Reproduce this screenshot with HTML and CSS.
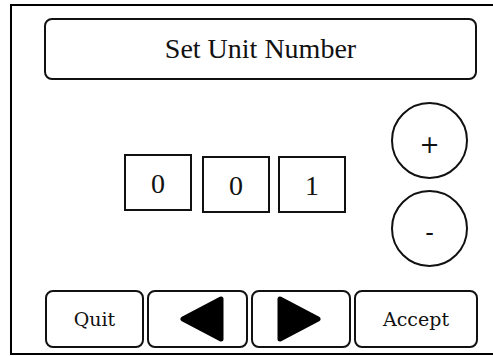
FILE: index.html
```html
<!DOCTYPE html>
<html lang="en">
<head>
    <meta charset="UTF-8">
    <meta name="viewport" content="width=device-width, initial-scale=1.0">
    <title>Set Unit Number</title>
    <link rel="stylesheet" href="styles.css">
</head>
<body>
    <div class="screen">
        <div class="title">Set Unit Number</div>

        <div class="middle">
            <div class="digits">
                <div class="digit first">0</div>
                <div class="digit">0</div>
                <div class="digit">1</div>
            </div>
            <div class="steppers">
                <div class="round">+</div>
                <div class="round">-</div>
            </div>
        </div>

        <div class="controls">
            <div class="btn quit">Quit</div>
            <div class="btn arrow">
                <svg width="46" height="48" viewBox="0 0 46 48">
                    <polygon points="4,24 42,4 42,44" fill="#000" stroke="#000" stroke-width="5" stroke-linejoin="round"/>
                </svg>
            </div>
            <div class="btn arrow right">
                <svg width="46" height="48" viewBox="0 0 46 48">
                    <polygon points="42,24 4,4 4,44" fill="#000" stroke="#000" stroke-width="5" stroke-linejoin="round"/>
                </svg>
            </div>
            <div class="btn accept">Accept</div>
        </div>
    </div>
</body>
</html>
```

FILE: styles.css
```css
html, body {
    margin: 0;
    padding: 0;
    background-color: #fff;
    overflow: hidden;
}
.screen {
    margin: 4px 0 0 10px;
    width: 481px;
    height: 347px;
    border: 2px solid #000;
    border-right: none;
    color: #111;
}
.title {
    box-sizing: border-box;
    margin: 12px 0 0 32px;
    width: 433px;
    height: 62px;
    border: 2px solid #111;
    border-radius: 8px;
    display: flex;
    align-items: center;
    justify-content: center;
    font-family: "Liberation Serif", "Times New Roman", serif;
    font-size: 28px;
}
.middle {
    display: flex;
    align-items: center;
    margin-top: 22px;
}
.digits {
    display: flex;
    align-items: center;
    gap: 8px;
    margin-left: 112px;
}
.digit {
    box-sizing: border-box;
    width: 68px;
    height: 57px;
    border: 2px solid #111;
    display: flex;
    align-items: center;
    justify-content: center;
    font-family: "Liberation Serif", "Times New Roman", serif;
    font-size: 28px;
    padding-top: 3px;
}
.digit.first {
    margin-right: 2px;
    margin-bottom: 5px;
}
.steppers {
    display: flex;
    flex-direction: column;
    gap: 11px;
    margin-left: 45px;
}
.round {
    box-sizing: border-box;
    width: 77px;
    height: 77px;
    border: 2px solid #111;
    border-radius: 50%;
    display: flex;
    align-items: center;
    justify-content: center;
    font-family: "DejaVu Sans", sans-serif;
    font-size: 24px;
    padding-top: 8px;
}
.controls {
    display: flex;
    gap: 3px;
    margin: 23px 0 0 33px;
}
.btn {
    box-sizing: border-box;
    height: 58px;
    border: 2px solid #111;
    border-radius: 8px;
    display: flex;
    align-items: center;
    justify-content: center;
    font-family: "DejaVu Serif", serif;
    font-size: 19px;
}
.quit {
    width: 99px;
}
.arrow {
    width: 101px;
    padding-left: 8px;
}
.arrow.right {
    width: 100px;
    padding-left: 0;
    padding-right: 4px;
}
.accept {
    width: 124px;
}
```
